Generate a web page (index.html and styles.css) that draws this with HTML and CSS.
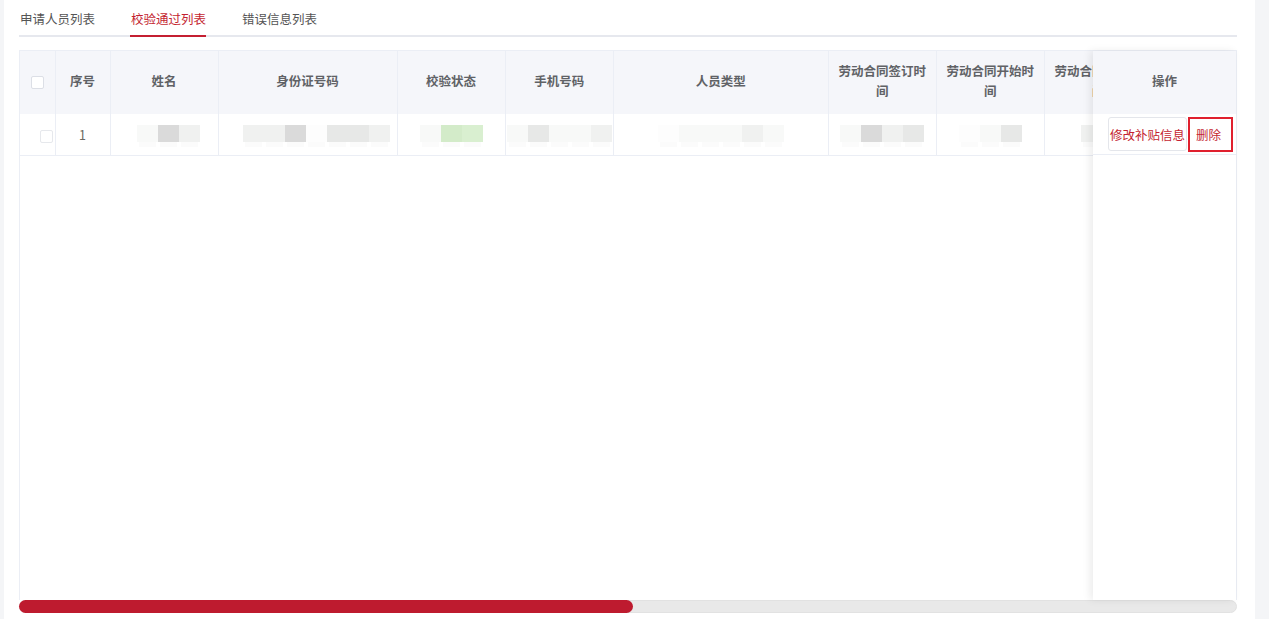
FILE: index.html
```html
<!DOCTYPE html>
<html lang="zh-CN">
<head>
    <meta charset="UTF-8">
    <title>校验通过列表</title>
    <link rel="stylesheet" href="styles.css">
</head>
<body>
    <div class="panel">
        <div class="tabs">
            <div class="tab">申请人员列表</div>
            <div class="tab active">校验通过列表</div>
            <div class="tab">错误信息列表</div>
        </div>

        <div class="grid">
            <div class="grid-body">
                <table>
                    <colgroup>
                        <col class="c-check">
                        <col class="c-no">
                        <col class="c-md">
                        <col class="c-id">
                        <col class="c-md">
                        <col class="c-md">
                        <col class="c-type">
                        <col class="c-md">
                        <col class="c-md">
                        <col class="c-md">
                        <col class="c-md">
                    </colgroup>
                    <thead>
                        <tr>
                            <th><span class="checkbox head-box"></span></th>
                            <th>序号</th>
                            <th>姓名</th>
                            <th>身份证号码</th>
                            <th>校验状态</th>
                            <th>手机号码</th>
                            <th>人员类型</th>
                            <th>劳动合同签订时间</th>
                            <th>劳动合同开始时间</th>
                            <th>劳动合同结束时间</th>
                            <th>操作</th>
                        </tr>
                    </thead>
                    <tbody>
                        <tr>
                            <td><span class="checkbox row-box"></span></td>
                            <td class="num">1</td>
                            <td><span class="masked shift-r"><i class="s1"></i><i class="s4"></i><i class="s2"></i></span></td>
                            <td><span class="masked wide"><i class="s2"></i><i class="s2"></i><i class="s4"></i><i class="s0"></i><i class="s3"></i><i class="s3"></i><i class="s2"></i></span></td>
                            <td><span class="masked"><i class="s1"></i><i class="ok"></i><i class="ok light"></i></span></td>
                            <td><span class="masked"><i class="s1"></i><i class="s3"></i><i class="s1"></i><i class="s1"></i><i class="s2"></i></span></td>
                            <td><span class="masked"><i class="s0"></i><i class="s1"></i><i class="s1"></i><i class="s1"></i><i class="s2"></i><i class="s1"></i></span></td>
                            <td><span class="masked"><i class="s1"></i><i class="s4"></i><i class="s2"></i><i class="s3"></i></span></td>
                            <td><span class="masked"><i class="s0"></i><i class="s1"></i><i class="s3"></i></span></td>
                            <td><span class="masked shift-l"><i class="s2"></i><i class="s3"></i></span></td>
                            <td></td>
                        </tr>
                    </tbody>
                </table>
            </div>

            <div class="fixed-col">
                <div class="fixed-head">操作</div>
                <div class="fixed-cell">
                    <button class="btn">修改补贴信息</button>
                    <button class="btn focus">删除</button>
                </div>
            </div>
        </div>

        <div class="scrollbar">
            <div class="thumb"></div>
        </div>
    </div>
</body>
</html>
```

FILE: styles.css
```css
body {
    margin: 0;
    background: #f4f5f7;
    font-family: "Noto Sans CJK SC", "Noto Sans", sans-serif;
    color: #606266;
    overflow: hidden;
}

.panel {
    margin-left: 4px;
    width: 1251px;
    height: 619px;
    background: #fff;
    padding: 0 18px 0 15px;
    box-sizing: border-box;
}

/* tabs */
.tabs {
    display: flex;
    height: 37px;
    border-bottom: 2px solid #e6e8ee;
    box-sizing: border-box;
    padding-left: 1px;
}

.tab {
    font-size: 12.5px;
    line-height: 30px;
    padding-top: 4px;
    margin-right: 36px;
    color: #555;
    box-sizing: border-box;
    height: 37px;
}

.tab.active {
    color: #c41f31;
    border-bottom: 2px solid #c41f31;
    margin-left: -1px;
    padding-left: 1px;
}

/* table */
.grid {
    position: relative;
    margin-top: 13px;
    height: 550px;
    border: 1px solid #ebeef5;
    border-bottom: none;
    box-sizing: border-box;
}

.grid-body {
    overflow: hidden;
    height: 100%;
}

table {
    border-collapse: collapse;
    table-layout: fixed;
    width: 1241px;
}

.c-check { width: 35px; }
.c-no { width: 55px; }
.c-md { width: 108px; }
.c-id { width: 179px; }
.c-type { width: 215px; }

th {
    height: 63px;
    background: #f5f6fa;
    font-size: 12.5px;
    font-weight: bold;
    line-height: 20px;
    color: #606266;
    padding: 0 8px 4px;
    border-right: 1px solid #ebeef5;
    text-align: center;
    box-sizing: border-box;
}

td {
    height: 41px;
    border-right: 1px solid #ebeef5;
    border-bottom: 1px solid #ebeef5;
    text-align: center;
    padding: 0;
    font-size: 12.5px;
}

td.num {
    color: #6b6a62;
}

.checkbox {
    display: inline-block;
    width: 11px;
    height: 11px;
    border: 1px solid #dcdfe6;
    border-radius: 2px;
    background: #fff;
    vertical-align: middle;
}

.head-box {
    margin-left: 1px;
}

.row-box {
    margin-left: 18px;
    border-color: #e6e8ec;
}

/* mosaic over personal data */
.masked {
    display: inline-flex;
    vertical-align: middle;
    margin-top: -6px;
}

.masked.shift-r,
.masked.shift-l {
    margin-left: 8px;
}

.masked.wide {
    gap: 0;
    margin-left: 18px;
}

.masked i {
    display: block;
    width: 21px;
    height: 17px;
    box-shadow: 0 7px 0 -2px rgba(0, 0, 0, 0.015);
}

.masked .s0 { background: #fdfdfd; }
.masked .s1 { background: #f8f9f8; }
.masked .s2 { background: #f0f1f0; }
.masked .s3 { background: #e7e8e7; }
.masked .s4 { background: #dadada; }
.masked .ok { background: #d3ebc9; }
.masked .ok.light { background: #d9efd0; }

/* pinned action column */
.fixed-col {
    position: absolute;
    top: 0;
    right: 0;
    bottom: 0;
    width: 143px;
    background: #fff;
    box-shadow: -3px 0 8px rgba(0, 0, 0, 0.08);
}

.fixed-head {
    height: 63px;
    line-height: 59px;
    background: #f5f6fa;
    font-size: 12.5px;
    font-weight: bold;
    text-align: center;
    color: #606266;
}

.fixed-cell {
    height: 41px;
    display: flex;
    align-items: center;
    gap: 1px;
    padding-left: 15px;
    border-bottom: 1px solid #ebeef5;
    box-sizing: border-box;
}

.btn {
    font-family: inherit;
    font-size: 12.5px;
    color: #c41f31;
    background: #fff;
    border: 1px solid #e4e6eb;
    border-radius: 3px;
    height: 34px;
    padding: 0 1px;
    cursor: pointer;
}

.btn.focus {
    border: 2px solid #e0202e;
    border-radius: 0;
    height: 35px;
    width: 45px;
    padding: 0 4px 0 0;
}

/* horizontal scrollbar */
.scrollbar {
    height: 13px;
    background: #e9e9e9;
    border: 1px solid #e2e2e2;
    border-radius: 7px;
    box-sizing: border-box;
    width: 1218px;
}

.thumb {
    width: 614px;
    height: 13px;
    margin-top: -1px;
    margin-left: -1px;
    background: #be1b2f;
    border-radius: 7px;
}
```
